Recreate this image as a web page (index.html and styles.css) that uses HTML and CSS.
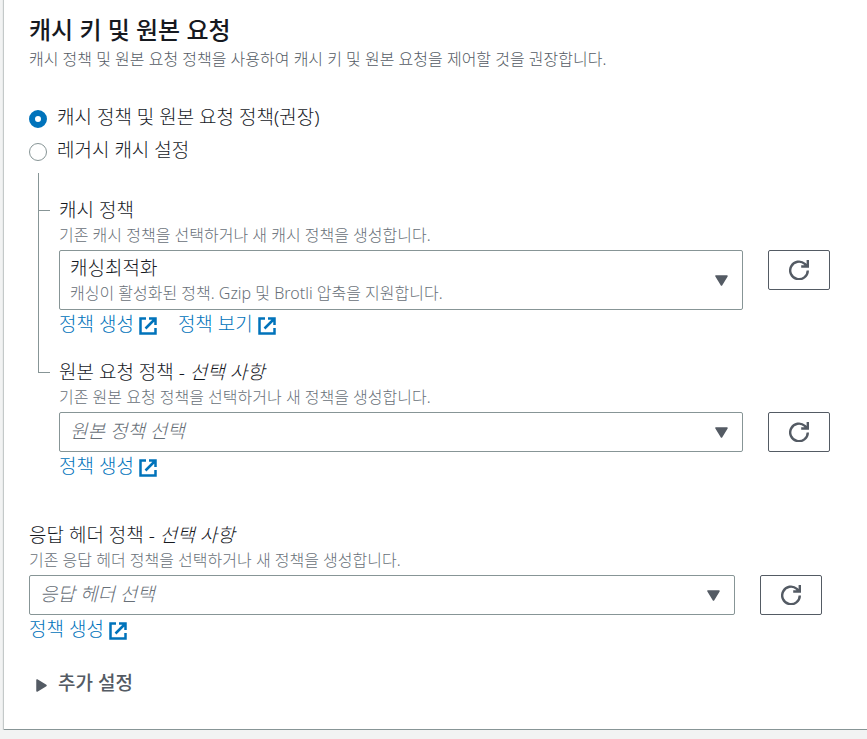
FILE: index.html
```html
<!DOCTYPE html>
<html lang="ko">
<head>
  <meta charset="UTF-8">
  <meta name="viewport" content="width=device-width, initial-scale=1">
  <title>캐시 키 및 원본 요청</title>
  <link rel="stylesheet" href="styles.css">
</head>
<body>

  <!-- Shared icons -->
  <svg class="sprite" aria-hidden="true">
    <symbol id="external" viewBox="0 0 18 18">
      <path d="M7 1.500H1.500V16.500H16.500V11M10 1.500H16.500V8M16 2L6.500 11.500" fill="none" stroke="currentColor" stroke-width="2.500"/>
    </symbol>
    <symbol id="refresh" viewBox="0 0 20 20">
      <path d="M18.800 10.500A8.800 8.800 0 1 1 15.800 3.800L18.300 6.300M18.800 0V6.500H12.200" fill="none" stroke="currentColor" stroke-width="2.400"/>
    </symbol>
    <symbol id="caret" viewBox="0 0 13 11">
      <path d="M1 1H12L6.500 10Z" fill="currentColor" stroke="currentColor" stroke-width="1.500" stroke-linejoin="round"/>
    </symbol>
  </svg>

  <main class="card">
    <header>
      <h2>캐시 키 및 원본 요청</h2>
      <p class="hint">캐시 정책 및 원본 요청 정책을 사용하여 캐시 키 및 원본 요청을 제어할 것을 권장합니다.</p>
    </header>

    <div class="radios">
      <label class="radio">
        <input type="radio" name="cache-mode" checked>
        <span>캐시 정책 및 원본 요청 정책(권장)</span>
      </label>
      <label class="radio">
        <input type="radio" name="cache-mode">
        <span>레거시 캐시 설정</span>
      </label>
    </div>

    <div class="tree">
      <!-- Cache policy -->
      <section class="field">
        <label class="title" for="cache-policy">캐시 정책</label>
        <p class="hint">기존 캐시 정책을 선택하거나 새 캐시 정책을 생성합니다.</p>
        <div class="row">
          <div class="select tall">
            <select id="cache-policy" aria-describedby="cache-policy-text">
              <option>캐싱최적화</option>
            </select>
            <span class="detail hint" id="cache-policy-text">캐싱이 활성화된 정책. Gzip 및 Brotli 압축을 지원합니다.</span>
            <svg class="caret" aria-hidden="true"><use href="#caret"/></svg>
          </div>
          <button class="refresh" type="button" aria-label="새로 고침"><svg><use href="#refresh"/></svg></button>
        </div>
        <div class="links">
          <a href="#">정책 생성<svg aria-hidden="true"><use href="#external"/></svg></a>
          <a href="#">정책 보기<svg aria-hidden="true"><use href="#external"/></svg></a>
        </div>
      </section>

      <!-- Origin request policy -->
      <section class="field">
        <label class="title" for="origin-policy">원본 요청 정책 - <em>선택 사항</em></label>
        <p class="hint">기존 원본 요청 정책을 선택하거나 새 정책을 생성합니다.</p>
        <div class="row">
          <div class="select">
            <select class="empty" id="origin-policy">
              <option>원본 정책 선택</option>
            </select>
            <svg class="caret" aria-hidden="true"><use href="#caret"/></svg>
          </div>
          <button class="refresh" type="button" aria-label="새로 고침"><svg><use href="#refresh"/></svg></button>
        </div>
        <div class="links">
          <a href="#">정책 생성<svg aria-hidden="true"><use href="#external"/></svg></a>
        </div>
      </section>
    </div>

    <!-- Response headers policy -->
    <section class="field response">
      <label class="title" for="header-policy">응답 헤더 정책 - <em>선택 사항</em></label>
      <p class="hint">기존 응답 헤더 정책을 선택하거나 새 정책을 생성합니다.</p>
      <div class="row">
        <div class="select">
          <select class="empty" id="header-policy">
            <option>응답 헤더 선택</option>
          </select>
          <svg class="caret" aria-hidden="true"><use href="#caret"/></svg>
        </div>
        <button class="refresh" type="button" aria-label="새로 고침"><svg><use href="#refresh"/></svg></button>
      </div>
      <div class="links">
        <a href="#">정책 생성<svg aria-hidden="true"><use href="#external"/></svg></a>
      </div>
    </section>

    <button class="expand" type="button" aria-expanded="false">
      <svg viewBox="0 0 11 13" aria-hidden="true">
        <path d="M1 1V12L10 6.500Z" fill="currentColor" stroke="currentColor" stroke-width="1.500" stroke-linejoin="round"/>
      </svg>
      추가 설정
    </button>
  </main>

</body>
</html>
```
FILE: styles.css
```css
:root {
  --text: #16191f;
  --gray: #545b64;
  --muted: #687078;
  --border: #879596;
  --blue: #0073bb;
}

* {
  box-sizing: border-box;
}

body {
  margin: 0;
  background: #f2f3f3;
  color: var(--text);
  font: 300 19px/28px "Noto Sans", "Noto Sans CJK KR", sans-serif;
}

h2,
p {
  margin: 0;
}

.sprite {
  display: none;
}

.card {
  margin-left: 4px;
  padding: 14px 0 32px 25px;
  border-bottom: 1px solid var(--border);
  background: #fff;
  box-shadow: 0 1px 1px #c4c9c9, -1px 0 1px #c4c9c9;
}

h2 {
  margin-bottom: 2px;
  font-size: 24px;
  font-weight: 500;
  line-height: 32px;
}

.hint {
  color: var(--muted);
  font-size: 16px;
  line-height: 22px;
}

header .hint {
  color: var(--gray);
}

/* Radios */
.radios {
  margin-top: 30px;
}

.radio {
  display: flex;
  align-items: center;
  gap: 10px;
  height: 33px;
}

.radio input {
  appearance: none;
  width: 18px;
  height: 18px;
  margin: 4px 0 0;
  border: 1px solid var(--border);
  border-radius: 50%;
  background: #fff;
}

.radio input:checked {
  border: 6px solid var(--blue);
}

/* Connector lines beside the nested fields */
.tree {
  display: grid;
  gap: 20px;
  padding: 30px 37px 0 30px;
}

.tree .field {
  position: relative;
}

.tree .field::before,
.tree .field::after {
  content: "";
  position: absolute;
  left: -21px;
  border: 0 solid var(--border);
}

.tree .field::before {
  top: -23px;
  bottom: 0;
  border-left-width: 1px;
}

.tree .field:last-child::before {
  bottom: auto;
  height: 37px;
}

.tree .field::after {
  top: 14px;
  width: 12px;
  border-top-width: 1px;
}

/* Fields */
.title {
  display: block;
}

.row {
  display: flex;
  align-items: flex-start;
  gap: 25px;
  margin-top: 4px;
}

.select {
  position: relative;
  flex: 1;
}

select {
  display: block;
  appearance: none;
  width: 100%;
  height: 40px;
  padding: 0 40px 3px 10px;
  border: 1px solid var(--border);
  border-radius: 2px;
  background: #fff;
  color: var(--text);
  font: inherit;
}

.tall select {
  height: 60px;
  padding-bottom: 25px;
}

select.empty {
  color: var(--muted);
  font-style: italic;
}

.detail {
  position: absolute;
  left: 11px;
  bottom: 6px;
  pointer-events: none;
}

.caret {
  position: absolute;
  top: 50%;
  right: 15px;
  width: 13px;
  height: 11px;
  margin-top: -5px;
  color: var(--gray);
  pointer-events: none;
}

.refresh {
  display: grid;
  place-items: center;
  width: 62px;
  height: 40px;
  padding: 0;
  border: 1px solid var(--gray);
  border-radius: 2px;
  background: #fff;
  color: var(--gray);
}

.refresh svg {
  width: 20px;
  height: 20px;
}

.links {
  display: flex;
  gap: 21px;
}

a {
  display: flex;
  align-items: center;
  gap: 5px;
  color: var(--blue);
  text-decoration: none;
}

a svg {
  width: 18px;
  height: 18px;
  margin-top: 4px;
}

.response {
  margin-top: 41px;
  padding-right: 45px;
}

.expand {
  display: flex;
  align-items: center;
  gap: 11px;
  margin-top: 26px;
  padding: 0 7px;
  border: 0;
  background: none;
  color: var(--gray);
  font: inherit;
  font-weight: 500;
}

.expand svg {
  width: 11px;
  height: 13px;
  margin-top: 4px;
}
```
